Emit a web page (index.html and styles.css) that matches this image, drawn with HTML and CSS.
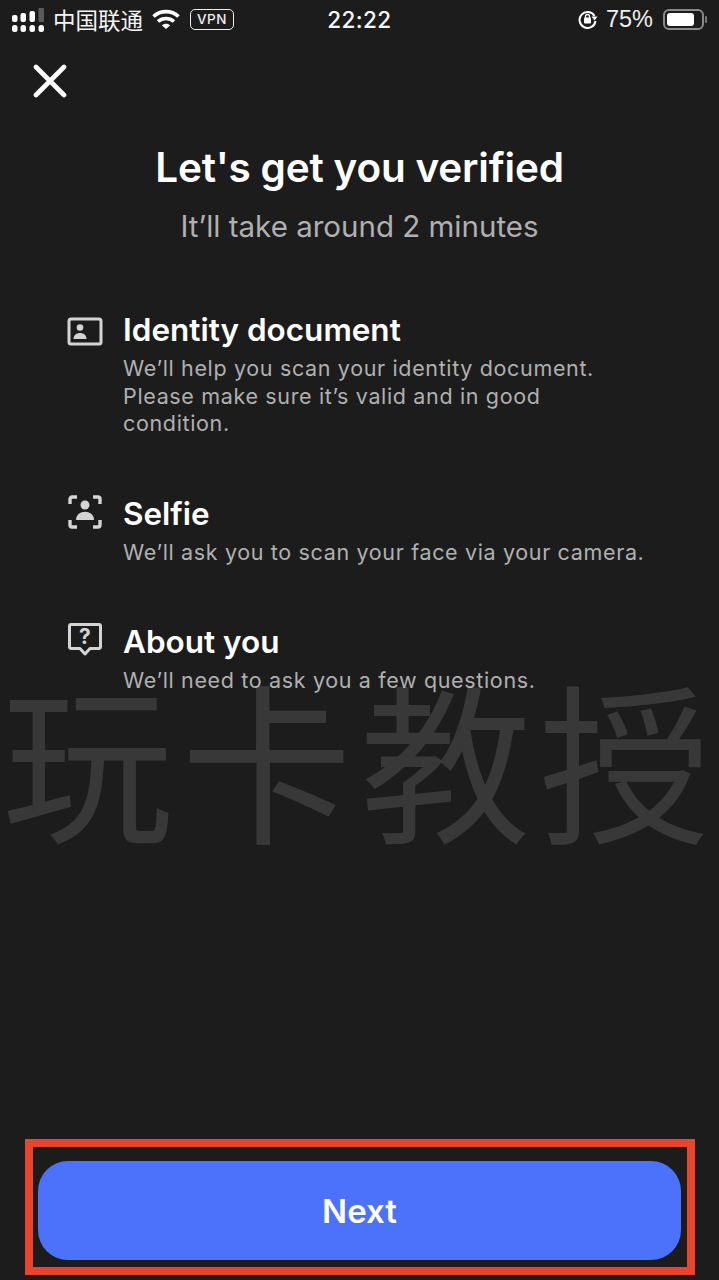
FILE: index.html
```html
<!DOCTYPE html>
<html lang="en">
<head>
<meta charset="utf-8">
<title>Let's get you verified</title>
<link rel="stylesheet" href="styles.css">
</head>
<body>
<main class="screen">
  <header class="status">
    <div class="status-left">
      <svg class="signal" width="32" height="25" viewBox="0 0 32 25" fill="#fff">
        <rect x="0" y="7" width="5.500" height="7" rx="2"/><rect x="0" y="17" width="5.500" height="7" rx="2.500"/>
        <rect x="8.500" y="5" width="5.500" height="9" rx="2"/><rect x="8.500" y="17" width="5.500" height="7" rx="2.500"/>
        <rect x="17.500" y="3" width="5.500" height="11" rx="2"/><rect x="17.500" y="17" width="5.500" height="7" rx="2.500"/>
        <rect x="26.500" y="0" width="5.500" height="14" rx="1" fill="#5a5a5a"/><rect x="26.500" y="17" width="5.500" height="7" rx="2.500"/>
      </svg>
      <span class="carrier">中国联通</span>
      <svg class="wifi" width="28" height="22" viewBox="0 0 28 22" fill="none" stroke="#fff" stroke-width="3.600">
        <path d="M1.500 8.500C8.500 2 19.500 2 26.500 8.500"/>
        <path d="M6 13.500C10.500 9.500 17.500 9.500 22 13.500"/>
        <path d="M14 21L9.800 17.300C12 15.200 16 15.200 18.200 17.300Z" fill="#fff" stroke="none"/>
      </svg>
      <span class="vpn">VPN</span>
    </div>
    <div class="clock">22:22</div>
    <div class="status-right">
      <svg class="lock" width="20" height="20" viewBox="0 0 20 20" fill="none">
        <path d="M16.500 7A8 8 0 1 0 17.500 12" stroke="#fff" stroke-width="2"/>
        <path d="M13.500 7.500H19.500L16.500 11.500Z" fill="#fff"/>
        <rect x="6" y="8.500" width="7" height="6" rx="1" fill="#fff"/>
        <path d="M7.500 9V7.500a2 2 0 0 1 4 0V9" stroke="#fff" stroke-width="1.300"/>
      </svg>
      <span class="percent">75%</span>
      <div class="battery"><div class="battery-fill"></div></div>
      <div class="battery-cap"></div>
    </div>
  </header>

  <button class="close" aria-label="Close">
    <svg width="34" height="34" viewBox="0 0 34 34" fill="none" stroke="#fff" stroke-width="4.600" stroke-linecap="round">
      <path d="M3 3L31 31M31 3L3 31"/>
    </svg>
  </button>

  <h1 class="title">Let's get you verified</h1>
  <p class="subtitle">It’ll take around 2 minutes</p>

  <section class="steps">
    <article class="step step-id">
      <svg class="step-icon" width="36" height="30" viewBox="0 0 36 30" fill="none">
        <rect x="2" y="2" width="32" height="25" rx="2" stroke="#d4d4d4" stroke-width="3"/>
        <circle cx="13" cy="10.500" r="3.300" fill="#d4d4d4"/>
        <path d="M6.500 22c0-8 13-8 13 0Z" fill="#d4d4d4"/>
      </svg>
      <div class="step-body">
        <h2 class="step-title">Identity document</h2>
        <p class="step-text">We’ll help you scan your identity document. Please make sure it’s valid and in good condition.</p>
      </div>
    </article>
    <article class="step step-selfie">
      <svg class="step-icon" width="36" height="36" viewBox="0 0 36 36" fill="none">
        <path d="M3 10V5a2 2 0 0 1 2-2h5M26 3h5a2 2 0 0 1 2 2v5M3 26v5a2 2 0 0 0 2 2h5M33 26v5a2 2 0 0 1-2 2h-5" stroke="#d4d4d4" stroke-width="3.400"/>
        <circle cx="18" cy="11" r="4.500" fill="#d4d4d4"/>
        <path d="M9 26c0-11 18-11 18 0Z" fill="#d4d4d4"/>
      </svg>
      <div class="step-body">
        <h2 class="step-title">Selfie</h2>
        <p class="step-text">We’ll ask you to scan your face via your camera.</p>
      </div>
    </article>
    <article class="step step-about">
      <svg class="step-icon" width="36" height="36" viewBox="0 0 36 36" fill="none">
        <path d="M4 2.500H32a1.500 1.500 0 0 1 1.500 1.500V25a1.500 1.500 0 0 1-1.500 1.500H23L18 32L13 26.500H4A1.500 1.500 0 0 1 2.500 25V4A1.500 1.500 0 0 1 4 2.500Z" stroke="#d4d4d4" stroke-width="3" stroke-linejoin="round"/>
        <text class="qmark" x="18" y="22" text-anchor="middle">?</text>
      </svg>
      <div class="step-body">
        <h2 class="step-title">About you</h2>
        <p class="step-text">We’ll need to ask you a few questions.</p>
      </div>
    </article>
  </section>

  <div class="watermark">玩卡教授</div>

  <footer class="footer">
    <div class="highlight">
      <button class="next">Next</button>
    </div>
  </footer>
</main>
</body>
</html>
```

FILE: styles.css
```css
* { box-sizing: border-box; margin: 0; padding: 0; }
html, body { width: 719px; height: 1280px; overflow: hidden; background: #1c1c1c; }
body { font-family: Inter, "Noto Sans CJK SC", sans-serif; color: #fff; }

.screen { position: relative; width: 719px; height: 1280px; display: flex; flex-direction: column; background: #1c1c1c; }

.status { height: 40px; padding: 0 12px; display: grid; grid-template-columns: 1fr auto 1fr; align-items: center; }
.status-left { display: flex; align-items: center; }
.signal { margin-top: 0; }
.carrier { font-family: "Noto Sans CJK SC", sans-serif; font-size: 22.500px; margin-left: 9px; line-height: 26px; color: #f4f4f4; margin-top: -2px; }
.wifi { margin-left: 9px; margin-top: -2px; }
.vpn { margin-left: 10px; margin-top: -2px; height: 21px; width: 44px; border: 1.500px solid #eee; border-radius: 5px; font-size: 13.500px; line-height: 18px; letter-spacing: .6px; text-align: center; color: #eee; font-weight: 500; }
.clock { font-size: 22.500px; font-weight: 500; letter-spacing: .4px; color: #f6f6f6; margin-top: -2px; }
.status-right { display: flex; align-items: center; justify-content: flex-end; margin-top: -2px; }
.percent { font-size: 23.500px; margin-left: 8px; color: #eee; font-family: "Liberation Sans", sans-serif; }
.battery { margin-left: 10px; width: 41px; height: 21px; border: 2px solid #8a8a8a; border-radius: 6px; padding: 2px; }
.battery-fill { width: 27px; height: 13px; background: #fff; border-radius: 3px; }
.battery-cap { width: 2px; height: 7px; margin-left: 1px; background: #777; border-radius: 1px; }

.close { align-self: flex-start; margin: 24px 0 0 33px; width: 34px; height: 34px; background: none; border: 0; display: block; }
.close svg { display: block; }

.title { margin-top: 45px; text-align: center; font-size: 40.500px; line-height: 50px; font-weight: 600; letter-spacing: -.2px; }
.subtitle { margin-top: 15px; text-align: center; font-size: 29.500px; line-height: 36px; color: #b0b0b0; }

.steps { margin-top: 67px; padding: 0 74px 0 67px; display: flex; flex-direction: column; }
.step { display: flex; align-items: flex-start; }
.step-selfie, .step-about { margin-top: 57px; }
.step-icon { flex: none; width: 36px; margin-right: 20px; }
.step-id .step-icon { margin-top: 6px; }
.step-selfie .step-icon { margin-top: -1px; }
.step-about .step-icon { margin-top: -1px; }
.step-body { flex: 1; min-width: 0; }
.step-title { font-size: 31.500px; line-height: 38px; font-weight: 600; white-space: nowrap; }
.step-text { margin-top: 6px; font-size: 21.500px; line-height: 27.500px; letter-spacing: .65px; color: #b0b0b0; }
.qmark { font-size: 21px; font-weight: 700; fill: #d4d4d4; }

.watermark { position: absolute; left: 1px; top: 656px; width: 718px; text-align: center; font-family: "Noto Sans CJK SC", sans-serif; font-size: 171px; font-weight: 400; line-height: 200px; letter-spacing: 8px; white-space: nowrap; color: rgba(255,255,255,.125); pointer-events: none; }

.footer { margin-top: auto; padding: 0 24px 5px 25px; }
.highlight { height: 136px; border: 8px solid #e8452c; padding: 14px 6px 7px 5px; }
.next { display: block; width: 100%; height: 100%; border: 0; border-radius: 30px; background: #4c71fb; color: #fff; font-family: inherit; font-size: 33px; font-weight: 600; }
```
